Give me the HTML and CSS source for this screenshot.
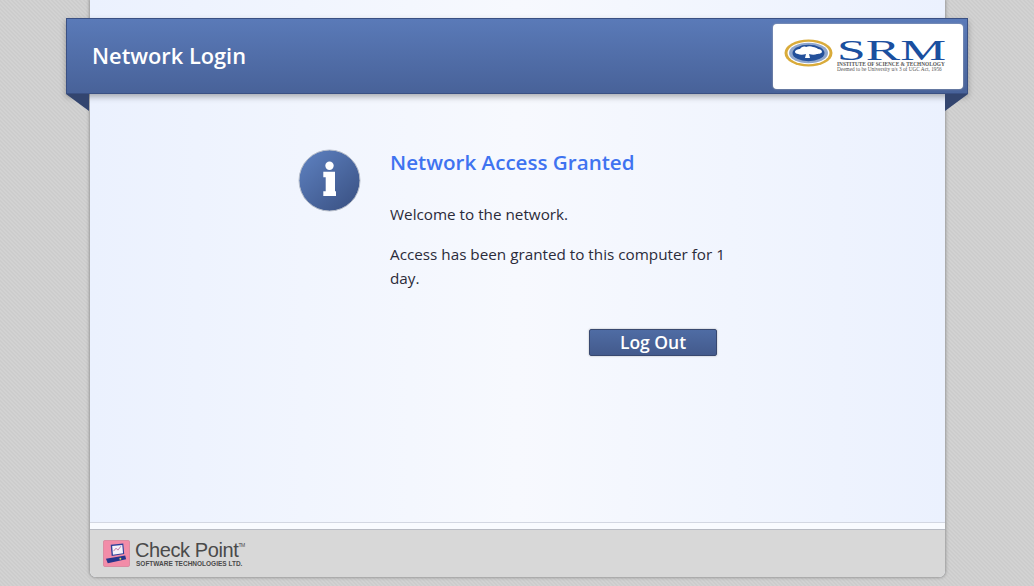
FILE: index.html
```html
<!DOCTYPE html>
<html>
<head>
    <title>Network Login</title>
    <link rel="stylesheet" href="styles.css">
</head>
<body>
    <div class="page">
        <div class="banner">
            <h1>Network Login</h1>
            <div class="logo">
                <svg class="logo-mark" width="50" height="30" viewBox="0 0 50 30">
                    <ellipse cx="24.500" cy="14" rx="24" ry="13.500" fill="#d9ab3a"/>
                    <ellipse cx="24.500" cy="14" rx="21" ry="11.200" fill="#fff"/>
                    <ellipse cx="24.500" cy="14" rx="19.500" ry="10.200" fill="#8fa6cc"/>
                    <ellipse cx="24.500" cy="14" rx="16" ry="8.200" fill="#23509a"/>
                    <path d="M11 13c0-2 3-3 5-3 1-2 4-3 6-2 2-1 5-1 7 0 2 0 4 1 5 2 2 0 4 1 4 3 0 1-3 2-5 2-2 1-5 1-8 0l1 4h-5l1-4c-3 1-6 1-8 0-1 0-3-1-3-2z" fill="#fff"/>
                </svg>
                <div class="logo-text">
                    <div class="logo-name">SRM</div>
                    <div class="logo-line">INSTITUTE OF SCIENCE &amp; TECHNOLOGY</div>
                    <div class="logo-sub">Deemed to be University u/s 3 of UGC Act, 1956</div>
                </div>
            </div>
            <span class="fold fold-left"></span>
            <span class="fold fold-right"></span>
        </div>

        <div class="main">
            <svg class="info-icon" width="64" height="64" viewBox="0 0 64 64">
                <defs>
                    <linearGradient id="infoFill" x1="0.15" y1="0.1" x2="0.85" y2="0.9">
                        <stop offset="0" stop-color="#5a7cba"/>
                        <stop offset="1" stop-color="#3d5588"/>
                    </linearGradient>
                </defs>
                <circle cx="31.500" cy="31.500" r="30.500" fill="url(#infoFill)" stroke="#b9bfca" stroke-width="1"/>
                <circle cx="31.500" cy="16.700" r="4.200" fill="#fff"/>
                <path d="M25.300 22.700H37V42.300H38V47H25.300V42.300H27.700V28.300H25.300z" fill="#fff"/>
            </svg>
            <div class="message">
                <h2>Network Access Granted</h2>
                <p>Welcome to the network.</p>
                <p>Access has been granted to this computer for 1 day.</p>
                <div class="actions">
                    <button>Log Out</button>
                </div>
            </div>
        </div>

        <div class="footer">
            <svg class="cp-icon" width="27" height="27" viewBox="0 0 28 28">
                <rect x="0.500" y="0.500" width="27" height="27" rx="1.500" fill="#f28ca8" stroke="#d98aa0"/>
                <path d="M8 5l13-1.500 1 11-13 2z" fill="#2c3f9a"/>
                <path d="M9.500 6.300l10.500-1.200 .8 8.600-10.500 1.500z" fill="#f4f2fa"/>
                <path d="M11 11.500l2.500-3 2 2 3-4" fill="none" stroke="#b55c90" stroke-width="0.800"/>
                <path d="M3 19.500l20-3.500 1 4-19 4z" fill="#25358c"/>
                <circle cx="18" cy="19.500" r="1" fill="#e4d94a"/>
            </svg>
            <div class="cp-text">
                <div class="cp-name">Check Point<sup>TM</sup></div>
                <div class="cp-sub">SOFTWARE TECHNOLOGIES LTD.</div>
            </div>
        </div>
    </div>
</body>
</html>
```

FILE: styles.css
```css
html, body {
    height: 586px;
    margin: 0;
    overflow: hidden;
}

body {
    font-family: "Open Sans", "Noto Sans", Arial, sans-serif;
    background-color: #cfcfcf;
    background-image: linear-gradient(45deg, #d2d2d2 25%, #cccccc 25%, #cccccc 50%, #d2d2d2 50%, #d2d2d2 75%, #cccccc 75%);
    background-size: 4px 4px;
    color: #2b2b3a;
}

.page {
    width: 855px;
    height: 577px;
    margin: 0 auto 0 90px;
    display: flex;
    flex-direction: column;
    background: linear-gradient(90deg, #ebf1fe 0%, #f7f9fe 50%, #ebf1fe 100%);
    border-radius: 0 0 6px 6px;
    box-shadow: 0 0 3px 1px #999;
}

.banner {
    position: relative;
    flex: none;
    height: 74px;
    margin: 18px -23px 0 -24px;
    padding: 0 4px 0 25px;
    display: flex;
    align-items: center;
    justify-content: space-between;
    background: linear-gradient(180deg, #5a7ab8 0%, #486299 100%);
    border: 1px solid #3a5083;
    box-shadow: 0 3px 6px rgba(0, 0, 0, 0.3);
}

.banner h1 {
    margin: 0 0 2px;
    font-size: 21.800px;
    font-weight: 600;
    color: #fff;
}

.fold {
    position: absolute;
    top: 75px;
    width: 0;
    height: 0;
    border-top: 17px solid #33456f;
}

.fold-left {
    left: -1px;
    border-left: 23px solid transparent;
}

.fold-right {
    right: -1px;
    border-right: 23px solid transparent;
}

.logo {
    width: 190px;
    height: 65px;
    box-sizing: border-box;
    padding: 0 0 0 11px;
    display: flex;
    align-items: center;
    gap: 3px;
    background: #fff;
    border-radius: 4px;
    box-shadow: 0 0 2px #b5b5b5;
}

.logo-mark {
    flex: none;
    margin-top: -4px;
}

.logo-text {
    font-family: "Liberation Serif", serif;
    margin-top: -2px;
}

.logo-name {
    font-size: 29px;
    line-height: 23px;
    color: #1a4f9f;
    white-space: nowrap;
    transform: scaleX(1.780);
    transform-origin: left;
}

.logo-line {
    font-size: 5.300px;
    font-weight: bold;
    line-height: 5px;
    color: #555;
    white-space: nowrap;
}

.logo-sub {
    font-size: 5.300px;
    line-height: 5px;
    color: #555;
    white-space: nowrap;
}

.main {
    flex: 1;
    display: flex;
    padding: 55px 0 0 208px;
    gap: 28px;
}

.info-icon {
    flex: none;
}

.message {
    width: 340px;
    font-size: 15.250px;
    line-height: 24px;
}

.message h2 {
    margin: 0 0 28px;
    padding-top: 1px;
    font-size: 20.600px;
    line-height: 24px;
    font-weight: 600;
    color: #3f73f0;
}

.message p {
    margin: 0 0 16px;
}

.actions {
    display: flex;
    justify-content: flex-end;
    padding: 23px 13px 0 0;
}

button {
    width: 128px;
    height: 27px;
    padding: 0 0 2px;
    background: linear-gradient(180deg, #4f6ca4 0%, #435a8c 100%);
    border: 1px solid #38486f;
    border-radius: 2px;
    box-shadow: 0 0 2px #aaa;
    color: #fff;
    font-family: inherit;
    font-size: 17.500px;
    line-height: 24px;
    font-weight: 600;
}

.footer {
    flex: none;
    height: 47px;
    padding-left: 13px;
    display: flex;
    align-items: center;
    gap: 5px;
    background: #d8d8d8;
    border-top: 1px solid #b9bcc4;
    border-radius: 0 0 6px 6px;
    box-shadow: 0 -6px 0 #f9fbff, 0 -7px 0 #d3d7e2;
}

.cp-icon {
    flex: none;
}

.cp-text {
    font-family: "Liberation Sans", Arial, sans-serif;
    color: #4a4a4a;
}

.cp-name {
    font-size: 20px;
    line-height: 20px;
    letter-spacing: -0.400px;
}

.cp-name sup {
    font-size: 5px;
    vertical-align: 10px;
    line-height: 0;
}

.cp-sub {
    font-size: 6.500px;
    line-height: 8px;
    font-weight: bold;
    white-space: nowrap;
    padding-left: 1px;
}
```
